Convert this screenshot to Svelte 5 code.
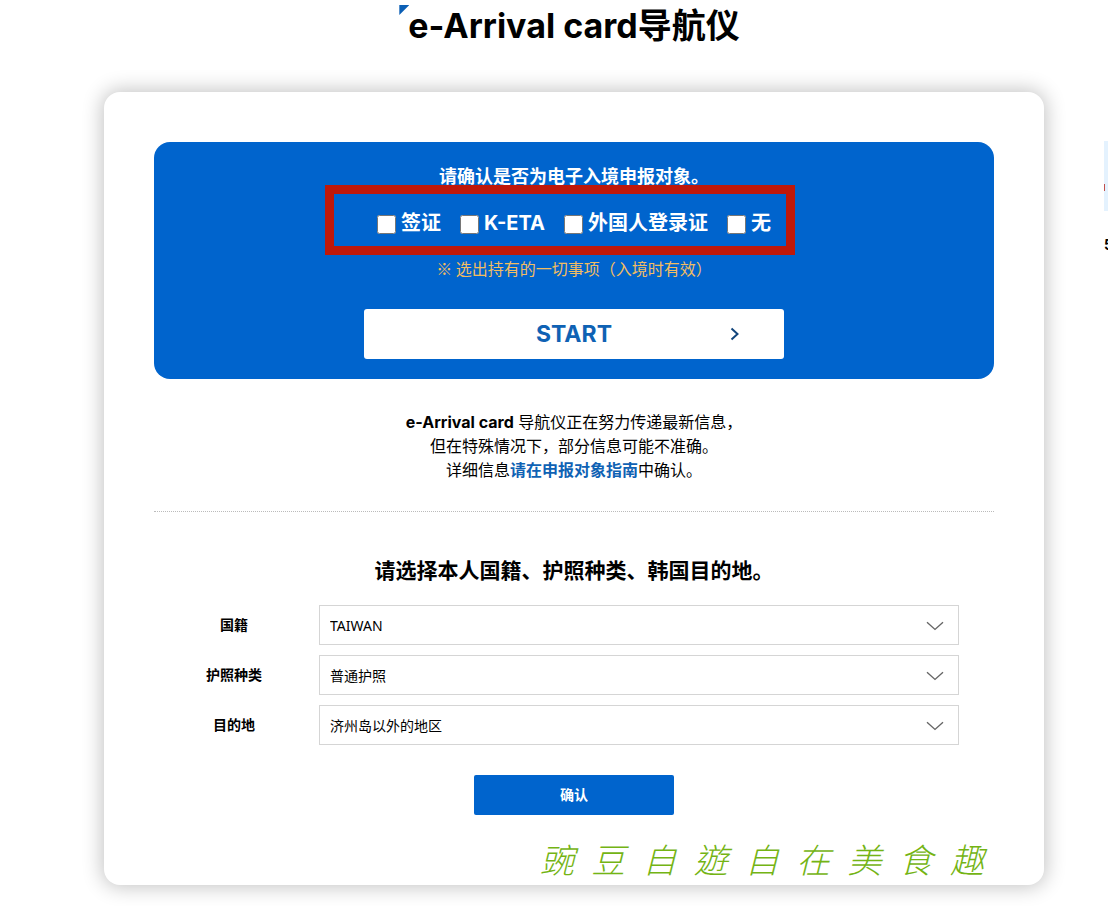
<script lang="ts">
  let holdings = [
    { id: 'visa', label: '签证', checked: false },
    { id: 'keta', label: 'K-ETA', checked: false },
    { id: 'residence', label: '外国人登录证', checked: false },
    { id: 'none', label: '无', checked: false }
  ];

  let fields = [
    { id: 'nationality', label: '国籍', value: 'TAIWAN' },
    { id: 'passport', label: '护照种类', value: '普通护照' },
    { id: 'destination', label: '目的地', value: '济州岛以外的地区' }
  ];

  const signature = ['豌', '豆', '自', '遊', '自', '在', '美', '食', '趣'];
</script>

<svelte:head>
  <title>e-Arrival card导航仪</title>
</svelte:head>

<div class="page">
  <main>
    <h1><span class="title">e-Arrival card导航仪</span></h1>

    <div class="card">
      <section class="target">
        <p class="question">请确认是否为电子入境申报对象。</p>
        <div class="holdings" role="group" aria-label="持有事项">
          {#each holdings as item}
            <label class="holding" for={item.id}>
              <input type="checkbox" id={item.id} bind:checked={item.checked} />
              <span>{item.label}</span>
            </label>
          {/each}
          <div class="frame"></div>
        </div>
        <p class="note">※ 选出持有的一切事项（入境时有效）</p>
        <button type="button" class="start">
          START
          <svg class="arrow" viewBox="0 0 10 14" width="10" height="14" aria-hidden="true">
            <path d="M1.5 1.5L7.5 7L1.5 12.5" />
          </svg>
        </button>
      </section>

      <p class="info">
        <strong>e-Arrival card</strong> 导航仪正在努力传递最新信息，<br />
        但在特殊情况下，部分信息可能不准确。<br />
        详细信息<a href="#guide">请在申报对象指南</a>中确认。
      </p>

      <form on:submit|preventDefault>
        <h2>请选择本人国籍、护照种类、韩国目的地。</h2>
        {#each fields as field}
          <div class="row">
            <label for={field.id}>{field.label}</label>
            <div class="select">
              <select id={field.id} bind:value={field.value}>
                <option value={field.value}>{field.value}</option>
              </select>
              <svg class="chevron" viewBox="0 0 18 10" width="18" height="10" aria-hidden="true">
                <path d="M1 1.2L9 8.4L17 1.2" />
              </svg>
            </div>
          </div>
        {/each}
        <button type="submit" class="confirm">确认</button>
      </form>

      <div class="signature" lang="zh-TW">
        {#each signature as char}
          <span>{char}</span>
        {/each}
      </div>
    </div>
  </main>

  <aside>
    <div class="banner"></div>
    <p>5</p>
  </aside>
</div>

<style>
  :global(body) {
    background: #fff;
  }

  .page {
    display: grid;
    grid-template-columns: minmax(0, 1fr) 4px;
    column-gap: 60px;
    padding-left: 104px;
    overflow: hidden;
    color: #000;
    font-family: Inter, 'Noto Sans CJK SC', sans-serif;
  }

  main {
    padding-bottom: 40px;
  }

  h1,
  h2,
  p {
    margin: 0;
    text-align: center;
  }

  h1 {
    padding: 2px 0 42px;
    font-size: 34px;
    font-weight: 700;
    line-height: 48px;
  }

  .title {
    position: relative;
  }

  /* folded corner above the first letter */
  .title::before {
    content: '';
    position: absolute;
    top: 0;
    left: -9px;
    width: 10px;
    height: 10px;
    background: #0b5fb5;
    clip-path: polygon(0 0, 100% 0, 0 100%);
  }

  .card {
    position: relative;
    padding: 50px 50px 70px;
    border-radius: 16px;
    background: #fff;
    box-shadow: 0 0 20px 2px rgba(0, 0, 0, 0.24);
  }

  .target {
    padding: 23px 20px 20px;
    border-radius: 16px;
    background: #0064cd;
    color: #fff;
  }

  .question {
    font-size: 18px;
    font-weight: 700;
    line-height: 24px;
  }

  .holdings {
    position: relative;
    display: flex;
    justify-content: center;
    align-items: center;
    gap: 19px;
    width: fit-content;
    height: 66px;
    margin: 0 auto;
  }

  .holding {
    display: flex;
    align-items: center;
    gap: 5px;
    padding-top: 2px;
    font-size: 20px;
    font-weight: 700;
    line-height: 30px;
    white-space: nowrap;
    cursor: pointer;
  }

  .holding input {
    width: 19px;
    height: 19px;
    margin: 3px 0 0;
  }

  .frame {
    position: absolute;
    inset: -4px -24px 0 -52px;
    border: 9px solid #bf180a;
    pointer-events: none;
  }

  .note {
    padding-bottom: 28px;
    color: #f2bd62;
    font-family: 'Noto Sans CJK SC', sans-serif;
    font-size: 16px;
    line-height: 26px;
  }

  .start {
    position: relative;
    display: block;
    width: 100%;
    max-width: 420px;
    height: 50px;
    margin: 0 auto;
    border: 0;
    border-radius: 3px;
    background: #fff;
    color: #0f62b4;
    font-family: inherit;
    font-size: 23px;
    font-weight: 700;
    cursor: pointer;
  }

  .arrow {
    position: absolute;
    top: 18px;
    right: 44px;
    fill: none;
    stroke: #12457c;
    stroke-width: 2;
  }

  .info {
    padding: 31px 0 29px;
    border-bottom: 1px dotted #bbb;
    font-size: 16px;
    line-height: 24px;
  }

  .info a {
    color: #0f62b4;
    font-weight: 700;
    text-decoration: none;
  }

  h2 {
    padding: 43px 0 18px;
    font-size: 21px;
    font-weight: 700;
    line-height: 32px;
  }

  .row {
    display: flex;
    align-items: center;
    gap: 5px;
    margin-bottom: 10px;
    padding-right: 35px;
  }

  .row label {
    flex: 0 0 160px;
    padding-bottom: 2px;
    font-size: 14px;
    font-weight: 700;
    text-align: center;
  }

  .select {
    position: relative;
    flex: 1;
  }

  select {
    display: block;
    width: 100%;
    height: 40px;
    padding: 0 40px 0 10px;
    appearance: none;
    border: 1px solid #d5d5d5;
    border-radius: 0;
    background: #fff;
    color: #000;
    font-family: 'Noto Sans', 'Noto Sans CJK SC', sans-serif;
    font-size: 14px;
  }

  .chevron {
    position: absolute;
    top: 16px;
    right: 15px;
    fill: none;
    stroke: #666;
    stroke-width: 1.4;
    pointer-events: none;
  }

  .confirm {
    display: block;
    width: 200px;
    height: 40px;
    margin: 30px auto 0;
    padding: 0 0 2px;
    border: 0;
    border-radius: 2px;
    background: #0064cd;
    color: #fff;
    font-family: inherit;
    font-size: 14px;
    font-weight: 700;
    cursor: pointer;
  }

  .signature {
    position: absolute;
    right: 60px;
    bottom: 2px;
    display: flex;
    justify-content: space-between;
    width: 444px;
    color: #74b414;
    font-family: 'Noto Sans CJK TC', sans-serif;
    font-size: 34px;
    font-style: italic;
    font-weight: 300;
    line-height: 48px;
  }

  aside {
    padding-top: 141px;
    overflow: hidden;
  }

  .banner {
    display: flex;
    align-items: center;
    width: 80px;
    height: 70px;
    background: #e4f2fe;
  }

  .banner::before {
    content: '';
    width: 1px;
    height: 7px;
    margin-top: 22px;
    background: #c0504d;
  }

  aside p {
    padding-top: 24px;
    font-size: 14px;
    font-weight: 700;
    line-height: 20px;
    text-align: left;
  }
</style>
